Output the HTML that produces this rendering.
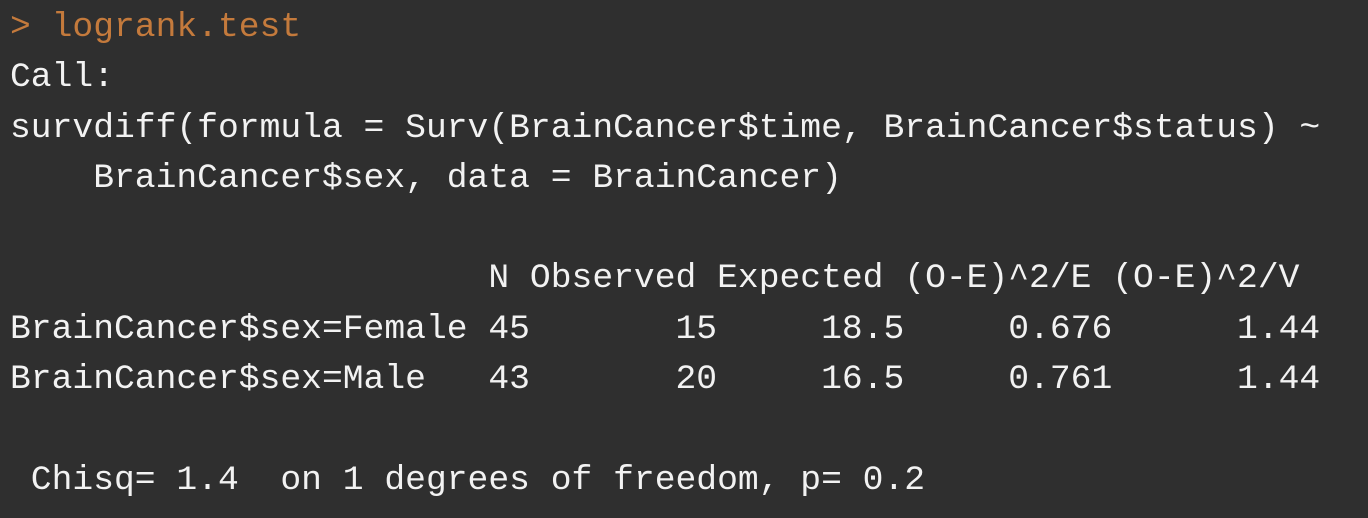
<!DOCTYPE html>
<html><head><style>
html,body{margin:0;padding:0;background:#2f2f2f;width:1368px;height:518px;overflow:hidden}
pre{margin:0;position:absolute;left:10px;top:3px;font-family:"Liberation Mono",monospace;font-size:34.67px;line-height:50.3px;color:#f2f2f2}
.o{color:#c47a3c}
</style></head><body>
<pre><span class="o">&gt; logrank.test</span>
Call:
survdiff(formula = Surv(BrainCancer$time, BrainCancer$status) ~
    BrainCancer$sex, data = BrainCancer)

                       N Observed Expected (O-E)^2/E (O-E)^2/V
BrainCancer$sex=Female 45       15     18.5     0.676      1.44
BrainCancer$sex=Male   43       20     16.5     0.761      1.44

 Chisq= 1.4  on 1 degrees of freedom, p= 0.2 </pre>
</body></html>
